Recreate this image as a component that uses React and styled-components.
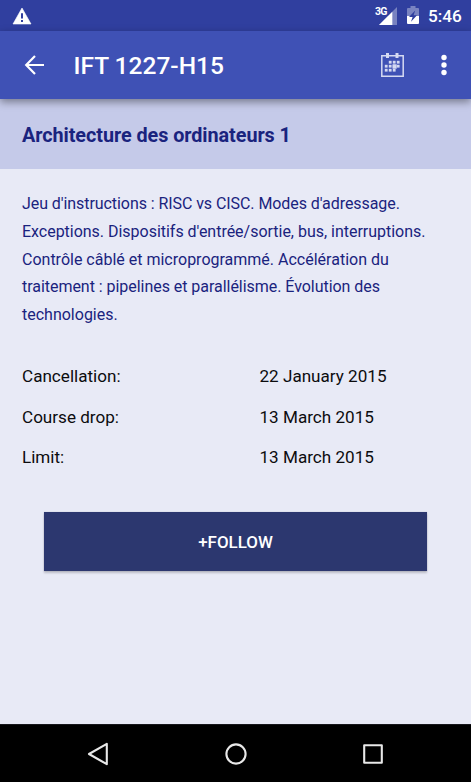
import React from "react";
import styled, { createGlobalStyle } from "styled-components";

const GlobalStyle = createGlobalStyle`
  * { box-sizing: border-box; }
  body { margin: 0; background: #e8eaf6; font-family: Roboto, sans-serif; }
`;

const Screen = styled.div`
  width: 471px;
  height: 782px;
  display: flex;
  flex-direction: column;
  background: #e8eaf6;
  overflow: hidden;
`;

const StatusBar = styled.header`
  height: 31px;
  flex: none;
  display: flex;
  align-items: center;
  padding: 0 10px 0 12px;
  background: #303f9f;
  color: #fff;
`;

const StatusIcons = styled.div`
  display: flex;
  align-items: center;
  margin-left: auto;
`;

const Network = styled.span`
  align-self: flex-start;
  margin-top: 1px;
  font-size: 10.5px;
  line-height: 10px;
  font-weight: 700;
  letter-spacing: -0.8px;
  width: 4px;
  white-space: nowrap;
`;

const BatterySlot = styled.span`
  display: flex;
  margin: 0 0 1px 10px;
`;

const Clock = styled.time`
  width: 33px;
  margin: 0 0 0 9px;
  font-size: 17.2px;
  line-height: 20px;
  font-weight: 500;
`;

const AppBar = styled.div`
  height: 68px;
  flex: none;
  display: flex;
  align-items: center;
  padding: 0 24px;
  background: #3f51b5;
  color: #fff;
  z-index: 1;
  box-shadow: 0 3px 8px rgba(0, 0, 0, 0.4);
`;

const IconButton = styled.button`
  display: flex;
  padding: 0;
  border: 0;
  background: none;
  color: inherit;
`;

const AppTitle = styled.h1`
  flex: 1;
  margin: 1px 0 0 28.5px;
  font-size: 24.5px;
  line-height: 30px;
  font-weight: 500;
`;

const Actions = styled.div`
  display: flex;
  align-items: center;
  gap: 37px;
`;

const CourseBanner = styled.h2`
  height: 70px;
  flex: none;
  margin: 0;
  padding: 25px 22px 0;
  background: #c5cae9;
  color: #1a237e;
  font-size: 19.8px;
  line-height: 24px;
  font-weight: 700;
  letter-spacing: -0.05px;
`;

const Content = styled.main`
  flex: 1;
  display: flex;
  flex-direction: column;
  padding: 21px 22px 0;
`;

const Description = styled.p`
  margin: 0;
  color: #1a237e;
  font-size: 16px;
  line-height: 27.8px;
  white-space: nowrap;
`;

const Line = styled.span`
  display: block;
  letter-spacing: ${({ $tracking = 0 }) => $tracking}px;
`;

const Dates = styled.dl`
  display: grid;
  grid-template-columns: 237.5px 1fr;
  grid-auto-rows: 40.4px;
  align-items: center;
  margin: 27px 0 0;
  color: #0c0c0e;
  font-size: 17.1px;
  line-height: 22px;
`;

const Label = styled.dt``;

const Value = styled.dd`
  margin: 0;
`;

const FollowButton = styled.button`
  height: 59px;
  margin: 35px 22px 0;
  padding: 0;
  border: 0;
  background: #2c376f;
  box-shadow: 0 2px 2px rgba(0, 0, 0, 0.2), 0 0 1px rgba(0, 0, 0, 0.2);
  color: #fff;
  font: 500 16.9px/20px Roboto, sans-serif;
`;

const NavBar = styled.nav`
  height: 58px;
  flex: none;
  display: flex;
  justify-content: center;
  align-items: center;
  gap: 113.5px;
  background: #000;
  border-top: 1px solid #17171c;
  color: #e8e8e8;
`;

const WarningIcon = () => (
  <svg width="20" height="18" viewBox="0 0 20 18">
    <path d="M10 1 19 17H1Z" fill="#fff" stroke="#fff" strokeWidth=".6" strokeLinejoin="round" />
    <path d="M9 6.2h2v5.3H9zM9 12.9h2v2H9z" fill="#303f9f" />
  </svg>
);

const SignalIcon = () => (
  <svg width="18" height="18" viewBox="0 0 18 18">
    <path d="M18 0V18H0Z" fill="#fff" opacity=".35" />
    <path d="M13.3 4.7V18H0Z" fill="#fff" />
  </svg>
);

const BatteryIcon = () => (
  <svg width="12" height="18" viewBox="0 0 12 18">
    <path d="M3.5 0h5v2H11a1 1 0 0 1 1 1v7H0V3a1 1 0 0 1 1-1h2.5z" fill="#fff" opacity=".36" />
    <path d="M0 10h12v7a1 1 0 0 1-1 1H1a1 1 0 0 1-1-1z" fill="#fff" />
    <path d="M8.2 4.5 2 11h3.6L4 15.8 10 9.2H6.6z" fill="#303f9f" />
  </svg>
);

const BackIcon = () => (
  <svg width="21" height="20" viewBox="0 0 21 20" fill="none" stroke="#fff" strokeWidth="2.2">
    <path d="M11 1 2.2 10 11 19M2.2 10H20" />
  </svg>
);

const calendarCells = [
  [8, 8], [12, 8], [16, 8],
  [4, 12], [8, 12], [12, 12], [16, 12],
  [4, 16], [8, 16], [12, 16],
];

const CalendarIcon = () => (
  <svg width="23" height="24" viewBox="0 0 23 24" fill="#d5daf2">
    <path d="M.8 2.8h21.4v20.4H.8z" fill="none" stroke="#d5daf2" strokeWidth="1.5" />
    <path d="M5 0h3v5H5zM14.5 0h3v5h-3z" />
    {calendarCells.map(([x, y]) => (
      <rect key={`${x}-${y}`} x={x - 0.2} y={y - 0.2} width="2.8" height="2.8" />
    ))}
    <path d="M11.5 11.3h4.2v4.4h-4.2z" />
  </svg>
);

const MoreIcon = () => (
  <svg width="6" height="22" viewBox="0 0 6 22" fill="#fff">
    <circle cx="3" cy="3.5" r="2.7" />
    <circle cx="3" cy="11" r="2.7" />
    <circle cx="3" cy="18.5" r="2.7" />
  </svg>
);

const NavIcon = ({ children }) => (
  <svg width="24" height="24" viewBox="0 0 24 24" fill="none" stroke="currentColor" strokeWidth="2.1" strokeLinejoin="round">
    {children}
  </svg>
);

const dates = [
  ["Cancellation:", "22 January 2015"],
  ["Course drop:", "13 March 2015"],
  ["Limit:", "13 March 2015"],
];

export default function App() {
  return (
    <>
      <GlobalStyle />
      <Screen>
        <StatusBar>
          <WarningIcon />
          <StatusIcons>
            <Network>3G</Network>
            <SignalIcon />
            <BatterySlot><BatteryIcon /></BatterySlot>
            <Clock>5:46</Clock>
          </StatusIcons>
        </StatusBar>
        <AppBar>
          <IconButton aria-label="Back"><BackIcon /></IconButton>
          <AppTitle>IFT 1227-H15</AppTitle>
          <Actions>
            <IconButton aria-label="Calendar"><CalendarIcon /></IconButton>
            <IconButton aria-label="More options"><MoreIcon /></IconButton>
          </Actions>
        </AppBar>
        <CourseBanner>Architecture des ordinateurs 1</CourseBanner>
        <Content>
          <Description>
            <Line $tracking={-0.07}>Jeu d'instructions : RISC vs CISC. Modes d'adressage.</Line>
            <Line $tracking={-0.02}>Exceptions. Dispositifs d'entrée/sortie, bus, interruptions.</Line>
            <Line>Contrôle câblé et microprogrammé. Accélération du</Line>
            <Line $tracking={-0.04}>traitement : pipelines et parallélisme. Évolution des</Line>
            <Line>technologies.</Line>
          </Description>
          <Dates>
            {dates.map(([label, value]) => (
              <React.Fragment key={label}>
                <Label>{label}</Label>
                <Value>{value}</Value>
              </React.Fragment>
            ))}
          </Dates>
          <FollowButton>+FOLLOW</FollowButton>
        </Content>
        <NavBar>
          <IconButton aria-label="Back"><NavIcon><path d="M20.8 1.8V22.2L3 12Z" /></NavIcon></IconButton>
          <IconButton aria-label="Home"><NavIcon><circle cx="12" cy="12" r="9.6" /></NavIcon></IconButton>
          <IconButton aria-label="Recent apps"><NavIcon><path d="M3.2 3.2h17.6v17.6H3.2z" /></NavIcon></IconButton>
        </NavBar>
      </Screen>
    </>
  );
}
